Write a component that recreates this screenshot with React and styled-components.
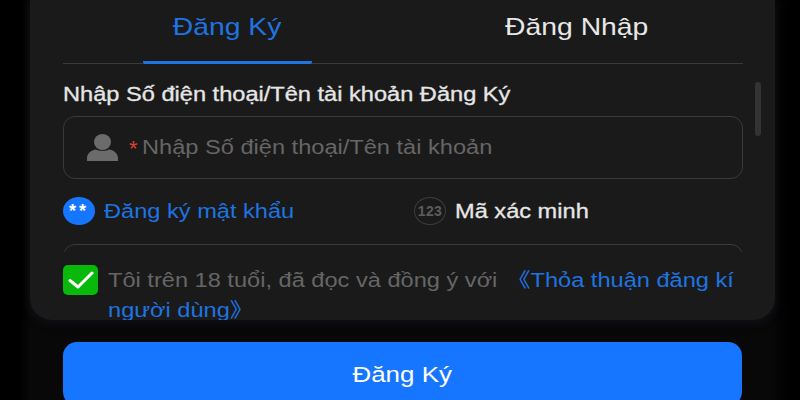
import React from "react";
import styled, { createGlobalStyle, css } from "styled-components";

const GlobalStyle = createGlobalStyle`
html, body {
  margin: 0;
  width: 800px;
  height: 400px;
  overflow: hidden;
  background: #050505;
  font-family: "Liberation Sans", "Noto Sans CJK SC", sans-serif;
}
`;

const wide = css`
  display: inline-block;
  transform: scaleX(1.18);
  transform-origin: ${(p) => (p.$center ? "center" : "left")} top;
`;

const Page = styled.div`
  width: 800px;
  height: 400px;
  overflow: hidden;
  display: flex;
  flex-direction: column;
  background: linear-gradient(90deg, #000 0, #000 20px, #080808 30px, #080808 770px, #000 790px);
`;

const Card = styled.section`
  position: relative;
  box-sizing: border-box;
  flex: none;
  height: 320px;
  margin: 0 25px 0 30px;
  padding: 0 32px 0 33px;
  background: #1a1a1a;
  border-radius: 0 0 22px 22px;
  overflow: hidden;
  box-shadow: 0 2px 10px rgba(20, 24, 34, 0.7);
`;

const Tabs = styled.div`
  display: flex;
  gap: 180px;
  height: 64px;
  padding-left: 80px;
  box-sizing: border-box;
  border-bottom: 1.5px solid #3a3a3a;
`;

const Tab = styled.div`
  width: 169px;
  height: 64px;
  box-sizing: border-box;
  padding-top: 13px;
  text-align: center;
  font-size: 24px;
  line-height: 28px;
  white-space: nowrap;
  color: ${(p) => (p.$active ? "#1f74e0" : "#e8e8e8")};
  border-bottom: 3px solid ${(p) => (p.$active ? "#1f74e0" : "transparent")};
  border-radius: 0 0 2px 2px;
`;

const Wide = styled.span`
  ${wide}
`;

const Scroller = styled.div`
  height: 188px;
  overflow: hidden;
`;

const Label = styled.div`
  height: 52px;
  box-sizing: border-box;
  padding-top: 18px;
  font-size: 20px;
  line-height: 24px;
  color: #e6e6e6;
  -webkit-text-stroke: 0.3px #e6e6e6;
  white-space: nowrap;
`;

const Field = styled.div`
  display: flex;
  align-items: center;
  box-sizing: border-box;
  height: 63px;
  padding-left: 23px;
  border: 1.5px solid #3a3a3a;
  border-radius: 12px;
`;

const Required = styled.span`
  margin-left: 11px;
  width: 13px;
  font-size: 22px;
  line-height: 22px;
  padding-top: 3px;
  color: #d9432f;
`;

const Placeholder = styled.span`
  ${wide}
  font-size: 20px;
  color: #666;
  white-space: nowrap;
`;

const Modes = styled.div`
  display: flex;
  align-items: center;
  height: 65px;
`;

const Mode = styled.div`
  display: flex;
  align-items: center;
  width: ${(p) => p.$width}px;
  gap: 9px;
  font-size: 20px;
  white-space: nowrap;
  color: ${(p) => (p.$active ? "#1f74e0" : "#e6e6e6")};
  -webkit-text-stroke: ${(p) => (p.$active ? "0" : "0.3px #e6e6e6")};
`;

const ModeIcon = styled.span`
  flex: none;
  display: flex;
  align-items: center;
  justify-content: center;
  box-sizing: border-box;
  width: 32px;
  height: 28px;
  margin-top: -2px;
  border-radius: 50%;
  background: ${(p) => (p.$active ? "#1776ff" : "transparent")};
  border: ${(p) => (p.$active ? "none" : "1.5px solid #3d3d3d")};
  color: ${(p) => (p.$active ? "#fff" : "#5c5c5c")};
  font-size: ${(p) => (p.$active ? "18px" : "14px")};
  font-weight: 700;
  letter-spacing: ${(p) => (p.$active ? "3px" : "0.3px")};
  -webkit-text-stroke: 0;
  line-height: ${(p) => (p.$active ? "32px" : "26px")};
`;

const Agreement = styled.div`
  display: flex;
  gap: 10px;
  padding-top: 13px;
`;

const CheckBox = styled.span`
  flex: none;
  display: flex;
  align-items: center;
  justify-content: center;
  width: 35px;
  height: 30px;
  border-radius: 5px;
  background: #08b80a;
`;

const AgreementText = styled.p`
  ${wide}
  flex: none;
  width: 537px;
  margin: 0;
  font-size: 20px;
  line-height: 30px;
  color: #666;
`;

const AgreementLink = styled.span`
  color: #1f74e0;
  margin-left: ${(p) => (p.$first ? "2.5px" : "0")};
`;

const ScrollThumb = styled.div`
  position: absolute;
  top: 82px;
  left: 725px;
  width: 6px;
  height: 54px;
  border-radius: 3px;
  background: #333;
`;

const Submit = styled.button`
  flex: none;
  box-sizing: border-box;
  display: block;
  width: 679px;
  height: 64px;
  margin: 22px 0 0 63px;
  padding: 2px 0 0;
  border: none;
  border-radius: 14px;
  background: #1776ff;
  color: #fff;
  font-family: inherit;
  font-size: 22px;
`;

function UserIcon() {
  return (
    <svg width="31" height="27" viewBox="0 0 31 27" fill="#6b6b6b">
      <ellipse cx="15.5" cy="8" rx="8.5" ry="8" />
      <path d="M0 27v-3c0-5 5-8 9-8.500c2 1.700 11 1.700 13 0c4 .5 9 3.500 9 8.500v3z" />
    </svg>
  );
}

function CheckIcon() {
  return (
    <svg width="26" height="20" viewBox="0 0 26 20" fill="none">
      <path d="M2 10.500L10 17L24 3" stroke="#fff" strokeWidth="3" strokeLinecap="round" strokeLinejoin="round" />
    </svg>
  );
}

export default function App() {
  return (
    <>
      <GlobalStyle />
      <Page>
        <Card>
          <Tabs>
            <Tab $active><Wide $center>Đăng Ký</Wide></Tab>
            <Tab><Wide $center>Đăng Nhập</Wide></Tab>
          </Tabs>
          <Scroller>
            <Label><Wide>Nhập Số điện thoại/Tên tài khoản Đăng Ký</Wide></Label>
            <Field>
              <UserIcon />
              <Required>*</Required>
              <Placeholder>Nhập Số điện thoại/Tên tài khoản</Placeholder>
            </Field>
            <Modes>
              <Mode $active $width={351}>
                <ModeIcon $active>**</ModeIcon>
                <Wide>Đăng ký mật khẩu</Wide>
              </Mode>
              <Mode $width={200}>
                <ModeIcon>123</ModeIcon>
                <Wide>Mã xác minh</Wide>
              </Mode>
            </Modes>
            <Field />
          </Scroller>
          <Agreement>
            <CheckBox>
              <CheckIcon />
            </CheckBox>
            <AgreementText>
              Tôi trên 18 tuổi, đã đọc và đồng ý với <AgreementLink $first>《Thỏa thuận đăng kí</AgreementLink> <AgreementLink>người dùng》</AgreementLink>
            </AgreementText>
          </Agreement>
          <ScrollThumb />
        </Card>
        <Submit><Wide $center>Đăng Ký</Wide></Submit>
      </Page>
    </>
  );
}
